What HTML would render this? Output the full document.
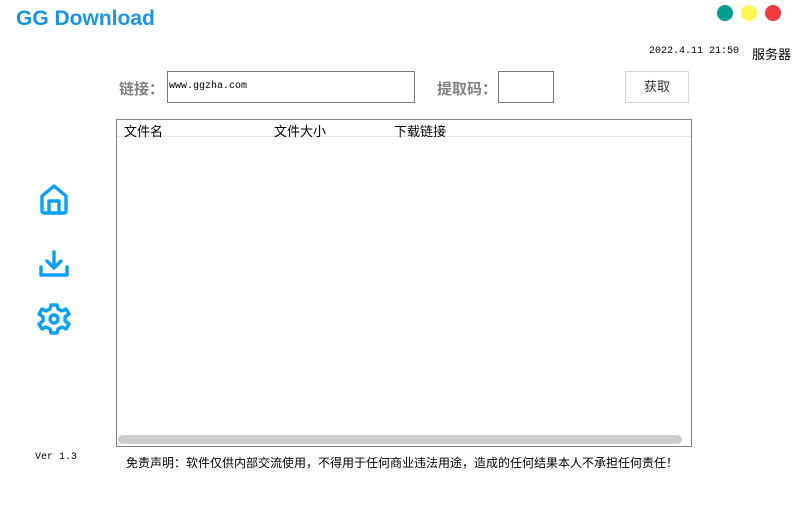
<!DOCTYPE html>
<html><head><meta charset="utf-8"><style>
body{margin:0;width:793px;height:506px;background:#fff;position:relative;overflow:hidden;font-family:"Liberation Sans","Noto Sans CJK SC",sans-serif;}
.a{position:absolute}
.dot{position:absolute;width:16px;height:16px;border-radius:50%;top:5px}
</style></head><body>
<div class="a" style="left:16px;top:7px;font-size:21px;font-weight:bold;color:#1a96e0;">GG Download</div>
<div class="dot" style="left:717px;background:#009e8e"></div>
<div class="dot" style="left:741px;background:#fff451"></div>
<div class="dot" style="left:765px;background:#ef3a3e"></div>
<div class="a" style="left:649px;top:46px;font-size:10px;font-family:'Liberation Mono',monospace;">2022.4.11 21:50</div>
<div class="a" style="left:752px;top:44px;font-size:13px;">服务器</div>
<div class="a" style="left:119px;top:78px;font-size:15px;font-weight:bold;color:#808080;">链接：</div>
<div class="a" style="left:167px;top:71px;width:246px;height:30px;border:1px solid #7a7a7a;"></div>
<div class="a" style="left:169px;top:81px;font-size:10px;font-family:'Liberation Mono',monospace;">www.ggzha.com</div>
<div class="a" style="left:437px;top:78px;font-size:15px;font-weight:bold;color:#808080;">提取码：</div>
<div class="a" style="left:498px;top:71px;width:54px;height:30px;border:1px solid #7a7a7a;"></div>
<div class="a" style="left:625px;top:71px;width:62px;height:30px;border:1px solid #d5d5d5;text-align:center;line-height:30px;font-size:13px;color:#333;">获取</div>
<div class="a" style="left:116px;top:119px;width:574px;height:326px;border:1px solid #828282;"></div>
<div class="a" style="left:117px;top:136px;width:574px;height:1px;background:#e5e5e5;"></div>
<div class="a" style="left:124px;top:121px;font-size:13px;">文件名</div>
<div class="a" style="left:274px;top:121px;font-size:13px;">文件大小</div>
<div class="a" style="left:394px;top:121px;font-size:13px;">下载链接</div>
<div class="a" style="left:118px;top:435px;width:564px;height:9px;border-radius:5px;background:#cdcdcd;"></div>
<svg class="a" style="left:38px;top:183px" width="32" height="32" viewBox="0 0 32 32" fill="none" stroke="#0aa0f5" stroke-width="3.4" stroke-linejoin="round" stroke-linecap="round"><path d="M4 13 L16 3 L28 13 V28 A2 2 0 0 1 26 30 H6 A2 2 0 0 1 4 28 Z"/><path d="M11 30 V18 H21 V30"/></svg>
<svg class="a" style="left:38px;top:249px" width="32" height="30" viewBox="0 0 32 30" fill="none" stroke="#0aa0f5" stroke-width="3.4" stroke-linejoin="round" stroke-linecap="round"><path d="M16 3 V18 M9 12 L16 19 L23 12"/><path d="M3 18 V26 H29 V18"/></svg>
<svg class="a" style="left:37px;top:302px" width="34" height="34" viewBox="0 0 34 34" fill="none" stroke="#0aa0f5" stroke-width="3.4" stroke-linejoin="round"><path d="M14 3 H20 L21 7 L25 9 L29 7 L32 12 L28 15 V19 L32 22 L29 27 L25 25 L21 27 L20 31 H14 L13 27 L9 25 L5 27 L2 22 L6 19 V15 L2 12 L5 7 L9 9 L13 7 Z"/><circle cx="17" cy="17" r="4"/></svg>
<div class="a" style="left:35px;top:452px;font-size:10px;font-family:'Liberation Mono',monospace;">Ver 1.3</div>
<div class="a" style="left:126px;top:454px;font-size:12px;">免责声明：软件仅供内部交流使用，不得用于任何商业违法用途，造成的任何结果本人不承担任何责任！</div>
</body></html>
